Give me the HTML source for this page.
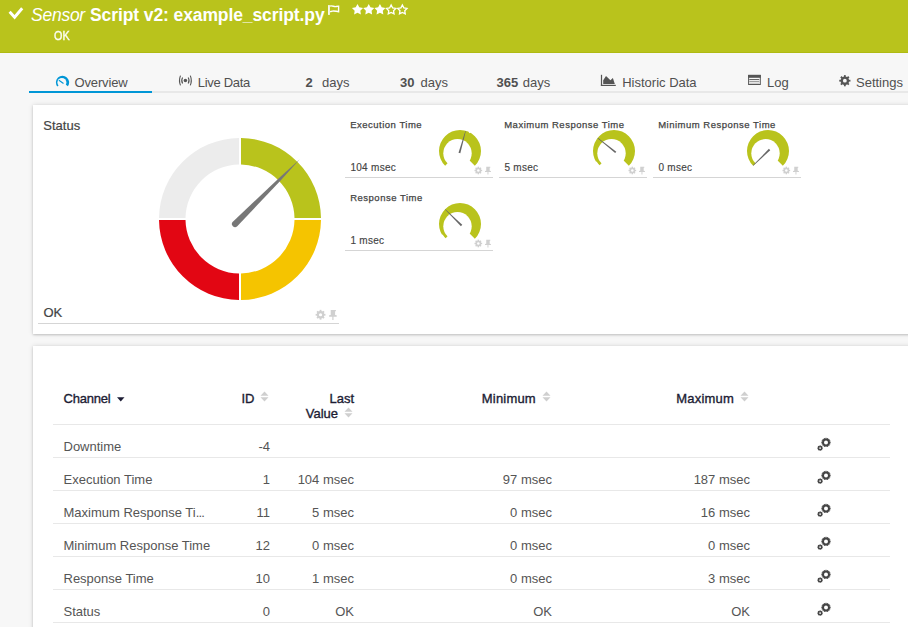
<!DOCTYPE html>
<html><head><meta charset="utf-8">
<style>
*{margin:0;padding:0;box-sizing:border-box}
html,body{width:908px;height:627px;overflow:hidden;background:#f7f7f7;font-family:"Liberation Sans",sans-serif;position:relative}
.a{position:absolute;white-space:nowrap}
#hdr{position:absolute;left:0;top:0;width:908px;height:53px;background:#b9c31c;border-bottom:1px solid #afba12}
.card{position:absolute;background:#fff;box-shadow:0 0 5px rgba(0,0,0,0.13),0 1px 2px rgba(0,0,0,0.16)}
.tab{font-size:13px;line-height:13px;color:#505050}
.tab b{font-weight:bold}
.glbl{font-size:9.5px;line-height:9.5px;color:#444;letter-spacing:0.5px;-webkit-text-stroke:0.25px #444}
.gval{font-size:10px;line-height:10px;color:#444;letter-spacing:0.3px;-webkit-text-stroke:0.15px #444}
.gline{position:absolute;height:1px;background:#d5d5d5}
.th{font-size:13px;line-height:13px;color:#1c1c34;-webkit-text-stroke:0.35px #1c1c34}
.td{font-size:13px;line-height:13px;color:#555}
.r{text-align:right}
.rl{position:absolute;left:53px;width:837px;height:1px;background:#e8e8e8}
</style></head><body>
<div id="hdr"></div>
<!-- check -->
<svg class="a" style="left:7px;top:5px" width="18" height="16" viewBox="0 0 18 16"><polyline points="2.6,6.8 7.6,12.2 15.2,3.2" fill="none" stroke="#fff" stroke-width="2.9"/></svg>
<div class="a" style="left:31px;top:6px;font-size:17.5px;line-height:18px;color:#fff;font-style:italic;letter-spacing:-0.25px">Sensor</div>
<div class="a" style="left:90px;top:6px;font-size:17.5px;line-height:18px;color:#fff;font-weight:bold;letter-spacing:-0.1px">Script v2: example_script.py</div>
<svg class="a" style="left:326px;top:3px" width="16" height="14" viewBox="0 0 16 14"><rect x="2.1" y="2.1" width="1.7" height="9.8" fill="#fff"/><path d="M4,3.1 C6.2,2.3 8.2,4.1 10.2,3.5 C11.4,3.2 12.4,3.1 12.6,3.1 V8.7 C10.4,8.6 8.4,7.5 6.4,8.1 C5.4,8.4 4.6,8.6 4,8.6" fill="none" stroke="#fff" stroke-width="1.4"/></svg>
<svg class="a" style="left:348px;top:0px" width="64" height="18" viewBox="0 0 64 18"><path d="M9.50,3.95 L11.26,7.32 L15.02,7.96 L12.35,10.68 L12.91,14.44 L9.50,12.75 L6.09,14.44 L6.65,10.68 L3.98,7.96 L7.74,7.32 Z" fill="#fff"/><path d="M20.72,3.95 L22.48,7.32 L26.24,7.96 L23.57,10.68 L24.13,14.44 L20.72,12.75 L17.31,14.44 L17.87,10.68 L15.20,7.96 L18.96,7.32 Z" fill="#fff"/><path d="M31.94,3.95 L33.70,7.32 L37.46,7.96 L34.79,10.68 L35.35,14.44 L31.94,12.75 L28.53,14.44 L29.09,10.68 L26.42,7.96 L30.18,7.32 Z" fill="#fff"/><path d="M43.16,5.00 L44.63,7.88 L47.82,8.39 L45.54,10.67 L46.04,13.86 L43.16,12.40 L40.28,13.86 L40.78,10.67 L38.50,8.39 L41.69,7.88 Z" fill="none" stroke="#fff" stroke-width="1.3" stroke-linejoin="miter"/><path d="M54.38,5.00 L55.85,7.88 L59.04,8.39 L56.76,10.67 L57.26,13.86 L54.38,12.40 L51.50,13.86 L52.00,10.67 L49.72,8.39 L52.91,7.88 Z" fill="none" stroke="#fff" stroke-width="1.3" stroke-linejoin="miter"/></svg>
<div class="a" style="left:54px;top:30px;font-size:12px;line-height:12px;color:#fbfdf0;-webkit-text-stroke:0.4px #fbfdf0;transform:scaleX(0.9);transform-origin:0 0">OK</div>

<!-- tabs -->
<div class="a" style="left:29px;top:91px;width:879px;height:2px;background:#e8e8e8"></div>
<div class="a" style="left:29px;top:91px;width:123px;height:2px;background:#0096d6"></div>
<svg class="a" style="left:52px;top:72px" width="20" height="18" viewBox="0 0 20 18"><defs><mask id="ovm"><rect width="20" height="18" fill="#fff"/><circle cx="9.9" cy="10.5" r="4.5" fill="#000"/></mask></defs><path d="M10.6,10.3 L5.3,14.4 A6.6,6.6 0 1 1 15.9,14.2 Z" fill="#0096d6" mask="url(#ovm)"/><path d="M6.9,8.3 L11.5,11.5" stroke="#0096d6" stroke-width="1.1"/></svg>
<div class="a tab" style="left:74.5px;top:76px;letter-spacing:-0.15px">Overview</div>
<svg class="a" style="left:177px;top:73px" width="17" height="15" viewBox="0 0 17 15"><circle cx="8.4" cy="7.5" r="1.75" fill="#555"/><path d="M3.5,2.6 Q1.5,7.5 3.5,12.4 M5.6,4.5 Q3.8,7.5 5.6,10.5 M11.2,4.5 Q13,7.5 11.2,10.5 M13.3,2.6 Q15.3,7.5 13.3,12.4" fill="none" stroke="#555" stroke-width="1.1"/></svg>
<div class="a tab" style="left:197.8px;top:76px;letter-spacing:-0.3px">Live Data</div>
<div class="a tab" style="left:305.6px;top:76px"><b>2</b></div>
<div class="a tab" style="left:322px;top:76px">days</div>
<div class="a tab" style="left:400px;top:76px"><b>30</b></div>
<div class="a tab" style="left:420.6px;top:76px">days</div>
<div class="a tab" style="left:496.6px;top:76px"><b>365</b></div>
<div class="a tab" style="left:522.7px;top:76px">days</div>
<svg class="a" style="left:596px;top:70px" width="22" height="18" viewBox="0 0 22 18"><rect x="4.9" y="4.8" width="1.2" height="11.2" fill="#555"/><rect x="4.9" y="14.8" width="14.9" height="1.2" fill="#555"/><path d="M7.2,14 V10.2 L10,6 L14.4,10.2 L16.9,8.1 L18.8,14 Z" fill="#555"/></svg>
<div class="a tab" style="left:622.2px;top:76px">Historic Data</div>
<svg class="a" style="left:742px;top:70px" width="22" height="18" viewBox="0 0 22 18"><rect x="6.6" y="5.4" width="11.7" height="9.1" fill="none" stroke="#555" stroke-width="1"/><rect x="6.1" y="4.9" width="12.7" height="2.9" fill="#555"/><rect x="7.3" y="9.1" width="9.9" height="0.9" fill="#555"/><rect x="7.3" y="10.9" width="9.9" height="0.9" fill="#888"/><rect x="7.3" y="12.7" width="9.9" height="1" fill="#bbb"/></svg>
<div class="a tab" style="left:767px;top:76px">Log</div>
<svg class="a" style="left:834px;top:70px" width="22" height="20" viewBox="0 0 22 20"><g fill="#555"><circle cx="10.85" cy="10.7" r="4.3"/><rect x="9.95" y="5.1" width="1.8" height="11.2" transform="rotate(0 10.85 10.7)"/><rect x="9.95" y="5.1" width="1.8" height="11.2" transform="rotate(45 10.85 10.7)"/><rect x="9.95" y="5.1" width="1.8" height="11.2" transform="rotate(90 10.85 10.7)"/><rect x="9.95" y="5.1" width="1.8" height="11.2" transform="rotate(135 10.85 10.7)"/></g><circle cx="10.85" cy="10.7" r="1.9" fill="#f7f7f7"/></svg>
<div class="a tab" style="left:856px;top:76px">Settings</div>

<!-- status card -->
<div class="card" style="left:33px;top:105px;width:900px;height:229px"></div>
<div class="a td" style="left:43.3px;top:119px;color:#444;-webkit-text-stroke:0.2px #444">Status</div>
<svg class="a" style="left:155px;top:134px" width="170" height="170" viewBox="0 0 170 170">
<g transform="translate(85,85)">
<path d="M-1,-81 A81,81 0 0 0 -81,-1 L-54.5,-1 A54.5,54.5 0 0 1 -1,-54.5 Z" fill="#ececec"/>
<path d="M1,-81 A81,81 0 0 1 81,-1 L54.5,-1 A54.5,54.5 0 0 0 1,-54.5 Z" fill="#b9c31c"/>
<path d="M81,1 A81,81 0 0 1 1,81 L1,54.5 A54.5,54.5 0 0 0 54.5,1 Z" fill="#f5c400"/>
<path d="M-1,81 A81,81 0 0 1 -81,1 L-54.5,1 A54.5,54.5 0 0 0 -1,54.5 Z" fill="#e20613"/>
<g transform="rotate(-45)"><path d="M-7,-3.1 L56,-1.45 L84.5,0 L56,1.45 L-7,3.1 A3.1,3.1 0 0 1 -7,-3.1 Z" fill="#777"/></g>
</g></svg>
<div class="a td" style="left:43.4px;top:306px;color:#444;-webkit-text-stroke:0.2px #444">OK</div>
<div class="gline" style="left:38px;top:323px;width:301px"></div>
<svg class="a" style="left:315px;top:309px" width="23.00" height="12.00" viewBox="0 0 23 12"><g fill="#d0d0d0"><circle cx="5.55" cy="5.75" r="3.7"/><rect x="4.65" y="0.85" width="1.8" height="9.8" transform="rotate(0 5.55 5.75)"/><rect x="4.65" y="0.85" width="1.8" height="9.8" transform="rotate(45 5.55 5.75)"/><rect x="4.65" y="0.85" width="1.8" height="9.8" transform="rotate(90 5.55 5.75)"/><rect x="4.65" y="0.85" width="1.8" height="9.8" transform="rotate(135 5.55 5.75)"/></g><circle cx="5.55" cy="5.75" r="1.6" fill="#fff"/><path d="M15.7,1 H20.9 V2.2 H20.1 V6.1 L21.7,6.3 V7.7 H14.1 V6.3 L15.7,6.1 V2.2 H15.7 Z M17.3,7.7 H18.5 V10.9 H17.3 Z" fill="#d0d0d0"/></svg>


<!-- GAUGES -->
<div class="a glbl" style="left:350.2px;top:120.0px;">Execution Time</div>
<div class="a gval" style="left:350.4px;top:163.2px;">104 msec</div>
<div class="gline" style="left:345px;top:177px;width:148px"></div>
<svg class="a" style="left:473.6px;top:166.1px" width="17.94" height="9.36" viewBox="0 0 23 12"><g fill="#d0d0d0"><circle cx="5.55" cy="5.75" r="3.7"/><rect x="4.65" y="0.85" width="1.8" height="9.8" transform="rotate(0 5.55 5.75)"/><rect x="4.65" y="0.85" width="1.8" height="9.8" transform="rotate(45 5.55 5.75)"/><rect x="4.65" y="0.85" width="1.8" height="9.8" transform="rotate(90 5.55 5.75)"/><rect x="4.65" y="0.85" width="1.8" height="9.8" transform="rotate(135 5.55 5.75)"/></g><circle cx="5.55" cy="5.75" r="1.6" fill="#fff"/><path d="M15.7,1 H20.9 V2.2 H20.1 V6.1 L21.7,6.3 V7.7 H14.1 V6.3 L15.7,6.1 V2.2 H15.7 Z M17.3,7.7 H18.5 V10.9 H17.3 Z" fill="#d0d0d0"/></svg>
<svg class="a" style="left:435px;top:126px" width="50" height="50" viewBox="0 0 50 50"><path d="M25,25 L10.15,39.85 A21,21 0 1 1 39.85,39.85 Z" fill="#b9c31c"/><circle cx="22.5" cy="27.3" r="14.2" fill="#fff"/><path d="M33.79,4.29 L33.99,7.36 L36.59,5.71 Z" fill="#fff"/><g transform="translate(25 25) rotate(-74.4)"><path d="M-2.2,-0.95 L20.8,-0.25 L20.8,0.25 L-2.2,0.95 Z" fill="#666"/></g></svg>
<div class="a glbl" style="left:504.2px;top:120.0px;">Maximum Response Time</div>
<div class="a gval" style="left:504.4px;top:163.2px;">5 msec</div>
<div class="gline" style="left:499px;top:177px;width:148px"></div>
<svg class="a" style="left:627.6px;top:166.1px" width="17.94" height="9.36" viewBox="0 0 23 12"><g fill="#d0d0d0"><circle cx="5.55" cy="5.75" r="3.7"/><rect x="4.65" y="0.85" width="1.8" height="9.8" transform="rotate(0 5.55 5.75)"/><rect x="4.65" y="0.85" width="1.8" height="9.8" transform="rotate(45 5.55 5.75)"/><rect x="4.65" y="0.85" width="1.8" height="9.8" transform="rotate(90 5.55 5.75)"/><rect x="4.65" y="0.85" width="1.8" height="9.8" transform="rotate(135 5.55 5.75)"/></g><circle cx="5.55" cy="5.75" r="1.6" fill="#fff"/><path d="M15.7,1 H20.9 V2.2 H20.1 V6.1 L21.7,6.3 V7.7 H14.1 V6.3 L15.7,6.1 V2.2 H15.7 Z M17.3,7.7 H18.5 V10.9 H17.3 Z" fill="#d0d0d0"/></svg>
<svg class="a" style="left:589px;top:126px" width="50" height="50" viewBox="0 0 50 50"><path d="M25,25 L10.15,39.85 A21,21 0 1 1 39.85,39.85 Z" fill="#b9c31c"/><circle cx="22.5" cy="27.3" r="14.2" fill="#fff"/><path d="M9.66,41.46 A22.5,22.5 0 0 1 5.71,36.59 L7.60,35.46 A20.3,20.3 0 0 0 11.16,39.85 Z" fill="#fff"/><g transform="translate(25 25) rotate(-141.5)"><path d="M-2.2,-0.95 L20.8,-0.25 L20.8,0.25 L-2.2,0.95 Z" fill="#666"/></g></svg>
<div class="a glbl" style="left:658.2px;top:120.0px;">Minimum Response Time</div>
<div class="a gval" style="left:658.4px;top:163.2px;">0 msec</div>
<div class="gline" style="left:653px;top:177px;width:148px"></div>
<svg class="a" style="left:781.6px;top:166.1px" width="17.94" height="9.36" viewBox="0 0 23 12"><g fill="#d0d0d0"><circle cx="5.55" cy="5.75" r="3.7"/><rect x="4.65" y="0.85" width="1.8" height="9.8" transform="rotate(0 5.55 5.75)"/><rect x="4.65" y="0.85" width="1.8" height="9.8" transform="rotate(45 5.55 5.75)"/><rect x="4.65" y="0.85" width="1.8" height="9.8" transform="rotate(90 5.55 5.75)"/><rect x="4.65" y="0.85" width="1.8" height="9.8" transform="rotate(135 5.55 5.75)"/></g><circle cx="5.55" cy="5.75" r="1.6" fill="#fff"/><path d="M15.7,1 H20.9 V2.2 H20.1 V6.1 L21.7,6.3 V7.7 H14.1 V6.3 L15.7,6.1 V2.2 H15.7 Z M17.3,7.7 H18.5 V10.9 H17.3 Z" fill="#d0d0d0"/></svg>
<svg class="a" style="left:743px;top:126px" width="50" height="50" viewBox="0 0 50 50"><path d="M25,25 L10.15,39.85 A21,21 0 1 1 39.85,39.85 Z" fill="#b9c31c"/><circle cx="22.5" cy="27.3" r="14.2" fill="#fff"/><g transform="translate(25 25) rotate(135.6)"><path d="M-2.2,-0.95 L20.8,-0.25 L20.8,0.25 L-2.2,0.95 Z" fill="#666"/></g></svg>
<div class="a glbl" style="left:350.2px;top:193.0px;">Response Time</div>
<div class="a gval" style="left:350.4px;top:236.2px;">1 msec</div>
<div class="gline" style="left:345px;top:250px;width:148px"></div>
<svg class="a" style="left:473.6px;top:239.1px" width="17.94" height="9.36" viewBox="0 0 23 12"><g fill="#d0d0d0"><circle cx="5.55" cy="5.75" r="3.7"/><rect x="4.65" y="0.85" width="1.8" height="9.8" transform="rotate(0 5.55 5.75)"/><rect x="4.65" y="0.85" width="1.8" height="9.8" transform="rotate(45 5.55 5.75)"/><rect x="4.65" y="0.85" width="1.8" height="9.8" transform="rotate(90 5.55 5.75)"/><rect x="4.65" y="0.85" width="1.8" height="9.8" transform="rotate(135 5.55 5.75)"/></g><circle cx="5.55" cy="5.75" r="1.6" fill="#fff"/><path d="M15.7,1 H20.9 V2.2 H20.1 V6.1 L21.7,6.3 V7.7 H14.1 V6.3 L15.7,6.1 V2.2 H15.7 Z M17.3,7.7 H18.5 V10.9 H17.3 Z" fill="#d0d0d0"/></svg>
<svg class="a" style="left:435px;top:199px" width="50" height="50" viewBox="0 0 50 50"><path d="M25,25 L10.15,39.85 A21,21 0 1 1 39.85,39.85 Z" fill="#b9c31c"/><circle cx="22.5" cy="27.3" r="14.2" fill="#fff"/><path d="M9.66,41.46 A22.5,22.5 0 0 1 5.71,36.59 L7.60,35.46 A20.3,20.3 0 0 0 11.16,39.85 Z" fill="#fff"/><g transform="translate(25 25) rotate(-135.5)"><path d="M-2.2,-0.95 L20.8,-0.25 L20.8,0.25 L-2.2,0.95 Z" fill="#666"/></g></svg>


<!-- table card -->
<div class="card" style="left:33px;top:346px;width:900px;height:300px"></div>
<div class="a th" style="left:63.5px;top:391.8px;letter-spacing:-0.2px">Channel</div>
<svg class="a" style="left:117px;top:397px" width="8" height="5" viewBox="0 0 8 5"><path d="M0,0.3 H7.5 L3.75,4.6 Z" fill="#1c1c34"/></svg>
<div class="a th r" style="left:-45.6px;width:300px;top:392.0px;">ID</div>
<svg class="a" style="left:260px;top:391px" width="9" height="11" viewBox="0 0 9 11"><path d="M4.5,0.5 L8.5,4.8 H0.5 Z M4.5,10.5 L8.5,6.2 H0.5 Z" fill="#cfcfcf"/></svg>
<div class="a th r" style="left:54.1px;width:300px;top:392.0px;">Last</div>
<div class="a th r" style="left:38.1px;width:300px;top:407.0px;">Value</div>
<svg class="a" style="left:344px;top:406.5px" width="9" height="11" viewBox="0 0 9 11"><path d="M4.5,0.5 L8.5,4.8 H0.5 Z M4.5,10.5 L8.5,6.2 H0.5 Z" fill="#cfcfcf"/></svg>
<div class="a th r" style="left:235.9px;width:300px;top:392.0px;letter-spacing:0.2px">Minimum</div>
<svg class="a" style="left:542px;top:391px" width="9" height="11" viewBox="0 0 9 11"><path d="M4.5,0.5 L8.5,4.8 H0.5 Z M4.5,10.5 L8.5,6.2 H0.5 Z" fill="#cfcfcf"/></svg>
<div class="a th r" style="left:434.0px;width:300px;top:392.0px;letter-spacing:0.2px">Maximum</div>
<svg class="a" style="left:740px;top:391px" width="9" height="11" viewBox="0 0 9 11"><path d="M4.5,0.5 L8.5,4.8 H0.5 Z M4.5,10.5 L8.5,6.2 H0.5 Z" fill="#cfcfcf"/></svg>
<div class="rl" style="top:424px"></div>
<div class="a td" style="left:63.5px;top:439.7px;">Downtime</div>
<div class="a td r" style="left:-30.0px;width:300px;top:439.7px;">-4</div>
<svg class="a" style="left:817px;top:437px" width="15" height="15" viewBox="0 0 15 15"><g fill="#444"><circle cx="9" cy="5.4" r="3.6"/><rect x="8.4" y="0.8" width="1.2" height="9.2" transform="rotate(0.0 9 5.4)"/><rect x="8.4" y="0.8" width="1.2" height="9.2" transform="rotate(22.5 9 5.4)"/><rect x="8.4" y="0.8" width="1.2" height="9.2" transform="rotate(45.0 9 5.4)"/><rect x="8.4" y="0.8" width="1.2" height="9.2" transform="rotate(67.5 9 5.4)"/><rect x="8.4" y="0.8" width="1.2" height="9.2" transform="rotate(90.0 9 5.4)"/><rect x="8.4" y="0.8" width="1.2" height="9.2" transform="rotate(112.5 9 5.4)"/><rect x="8.4" y="0.8" width="1.2" height="9.2" transform="rotate(135.0 9 5.4)"/><rect x="8.4" y="0.8" width="1.2" height="9.2" transform="rotate(157.5 9 5.4)"/><circle cx="3.1" cy="11.1" r="2.2"/><rect x="2.6" y="8.2" width="1" height="5.8" transform="rotate(0 3.1 11.1)"/><rect x="2.6" y="8.2" width="1" height="5.8" transform="rotate(45 3.1 11.1)"/><rect x="2.6" y="8.2" width="1" height="5.8" transform="rotate(90 3.1 11.1)"/><rect x="2.6" y="8.2" width="1" height="5.8" transform="rotate(135 3.1 11.1)"/></g><circle cx="9" cy="5.4" r="2" fill="#fff"/><circle cx="3.1" cy="11.1" r="0.9" fill="#fff"/></svg>
<div class="rl" style="top:457px"></div>
<div class="a td" style="left:63.5px;top:472.7px;">Execution Time</div>
<div class="a td r" style="left:-30.0px;width:300px;top:472.7px;">1</div>
<div class="a td r" style="left:54.0px;width:300px;top:472.7px;">104 msec</div>
<div class="a td r" style="left:252.0px;width:300px;top:472.7px;">97 msec</div>
<div class="a td r" style="left:450.0px;width:300px;top:472.7px;">187 msec</div>
<svg class="a" style="left:817px;top:470px" width="15" height="15" viewBox="0 0 15 15"><g fill="#444"><circle cx="9" cy="5.4" r="3.6"/><rect x="8.4" y="0.8" width="1.2" height="9.2" transform="rotate(0.0 9 5.4)"/><rect x="8.4" y="0.8" width="1.2" height="9.2" transform="rotate(22.5 9 5.4)"/><rect x="8.4" y="0.8" width="1.2" height="9.2" transform="rotate(45.0 9 5.4)"/><rect x="8.4" y="0.8" width="1.2" height="9.2" transform="rotate(67.5 9 5.4)"/><rect x="8.4" y="0.8" width="1.2" height="9.2" transform="rotate(90.0 9 5.4)"/><rect x="8.4" y="0.8" width="1.2" height="9.2" transform="rotate(112.5 9 5.4)"/><rect x="8.4" y="0.8" width="1.2" height="9.2" transform="rotate(135.0 9 5.4)"/><rect x="8.4" y="0.8" width="1.2" height="9.2" transform="rotate(157.5 9 5.4)"/><circle cx="3.1" cy="11.1" r="2.2"/><rect x="2.6" y="8.2" width="1" height="5.8" transform="rotate(0 3.1 11.1)"/><rect x="2.6" y="8.2" width="1" height="5.8" transform="rotate(45 3.1 11.1)"/><rect x="2.6" y="8.2" width="1" height="5.8" transform="rotate(90 3.1 11.1)"/><rect x="2.6" y="8.2" width="1" height="5.8" transform="rotate(135 3.1 11.1)"/></g><circle cx="9" cy="5.4" r="2" fill="#fff"/><circle cx="3.1" cy="11.1" r="0.9" fill="#fff"/></svg>
<div class="rl" style="top:490px"></div>
<div class="a td" style="left:63.5px;top:505.7px;">Maximum Response Ti<span style="letter-spacing:-0.8px">...</span></div>
<div class="a td r" style="left:-30.0px;width:300px;top:505.7px;">11</div>
<div class="a td r" style="left:54.0px;width:300px;top:505.7px;">5 msec</div>
<div class="a td r" style="left:252.0px;width:300px;top:505.7px;">0 msec</div>
<div class="a td r" style="left:450.0px;width:300px;top:505.7px;">16 msec</div>
<svg class="a" style="left:817px;top:503px" width="15" height="15" viewBox="0 0 15 15"><g fill="#444"><circle cx="9" cy="5.4" r="3.6"/><rect x="8.4" y="0.8" width="1.2" height="9.2" transform="rotate(0.0 9 5.4)"/><rect x="8.4" y="0.8" width="1.2" height="9.2" transform="rotate(22.5 9 5.4)"/><rect x="8.4" y="0.8" width="1.2" height="9.2" transform="rotate(45.0 9 5.4)"/><rect x="8.4" y="0.8" width="1.2" height="9.2" transform="rotate(67.5 9 5.4)"/><rect x="8.4" y="0.8" width="1.2" height="9.2" transform="rotate(90.0 9 5.4)"/><rect x="8.4" y="0.8" width="1.2" height="9.2" transform="rotate(112.5 9 5.4)"/><rect x="8.4" y="0.8" width="1.2" height="9.2" transform="rotate(135.0 9 5.4)"/><rect x="8.4" y="0.8" width="1.2" height="9.2" transform="rotate(157.5 9 5.4)"/><circle cx="3.1" cy="11.1" r="2.2"/><rect x="2.6" y="8.2" width="1" height="5.8" transform="rotate(0 3.1 11.1)"/><rect x="2.6" y="8.2" width="1" height="5.8" transform="rotate(45 3.1 11.1)"/><rect x="2.6" y="8.2" width="1" height="5.8" transform="rotate(90 3.1 11.1)"/><rect x="2.6" y="8.2" width="1" height="5.8" transform="rotate(135 3.1 11.1)"/></g><circle cx="9" cy="5.4" r="2" fill="#fff"/><circle cx="3.1" cy="11.1" r="0.9" fill="#fff"/></svg>
<div class="rl" style="top:523px"></div>
<div class="a td" style="left:63.5px;top:538.7px;">Minimum Response Time</div>
<div class="a td r" style="left:-30.0px;width:300px;top:538.7px;">12</div>
<div class="a td r" style="left:54.0px;width:300px;top:538.7px;">0 msec</div>
<div class="a td r" style="left:252.0px;width:300px;top:538.7px;">0 msec</div>
<div class="a td r" style="left:450.0px;width:300px;top:538.7px;">0 msec</div>
<svg class="a" style="left:817px;top:536px" width="15" height="15" viewBox="0 0 15 15"><g fill="#444"><circle cx="9" cy="5.4" r="3.6"/><rect x="8.4" y="0.8" width="1.2" height="9.2" transform="rotate(0.0 9 5.4)"/><rect x="8.4" y="0.8" width="1.2" height="9.2" transform="rotate(22.5 9 5.4)"/><rect x="8.4" y="0.8" width="1.2" height="9.2" transform="rotate(45.0 9 5.4)"/><rect x="8.4" y="0.8" width="1.2" height="9.2" transform="rotate(67.5 9 5.4)"/><rect x="8.4" y="0.8" width="1.2" height="9.2" transform="rotate(90.0 9 5.4)"/><rect x="8.4" y="0.8" width="1.2" height="9.2" transform="rotate(112.5 9 5.4)"/><rect x="8.4" y="0.8" width="1.2" height="9.2" transform="rotate(135.0 9 5.4)"/><rect x="8.4" y="0.8" width="1.2" height="9.2" transform="rotate(157.5 9 5.4)"/><circle cx="3.1" cy="11.1" r="2.2"/><rect x="2.6" y="8.2" width="1" height="5.8" transform="rotate(0 3.1 11.1)"/><rect x="2.6" y="8.2" width="1" height="5.8" transform="rotate(45 3.1 11.1)"/><rect x="2.6" y="8.2" width="1" height="5.8" transform="rotate(90 3.1 11.1)"/><rect x="2.6" y="8.2" width="1" height="5.8" transform="rotate(135 3.1 11.1)"/></g><circle cx="9" cy="5.4" r="2" fill="#fff"/><circle cx="3.1" cy="11.1" r="0.9" fill="#fff"/></svg>
<div class="rl" style="top:556px"></div>
<div class="a td" style="left:63.5px;top:571.7px;">Response Time</div>
<div class="a td r" style="left:-30.0px;width:300px;top:571.7px;">10</div>
<div class="a td r" style="left:54.0px;width:300px;top:571.7px;">1 msec</div>
<div class="a td r" style="left:252.0px;width:300px;top:571.7px;">0 msec</div>
<div class="a td r" style="left:450.0px;width:300px;top:571.7px;">3 msec</div>
<svg class="a" style="left:817px;top:569px" width="15" height="15" viewBox="0 0 15 15"><g fill="#444"><circle cx="9" cy="5.4" r="3.6"/><rect x="8.4" y="0.8" width="1.2" height="9.2" transform="rotate(0.0 9 5.4)"/><rect x="8.4" y="0.8" width="1.2" height="9.2" transform="rotate(22.5 9 5.4)"/><rect x="8.4" y="0.8" width="1.2" height="9.2" transform="rotate(45.0 9 5.4)"/><rect x="8.4" y="0.8" width="1.2" height="9.2" transform="rotate(67.5 9 5.4)"/><rect x="8.4" y="0.8" width="1.2" height="9.2" transform="rotate(90.0 9 5.4)"/><rect x="8.4" y="0.8" width="1.2" height="9.2" transform="rotate(112.5 9 5.4)"/><rect x="8.4" y="0.8" width="1.2" height="9.2" transform="rotate(135.0 9 5.4)"/><rect x="8.4" y="0.8" width="1.2" height="9.2" transform="rotate(157.5 9 5.4)"/><circle cx="3.1" cy="11.1" r="2.2"/><rect x="2.6" y="8.2" width="1" height="5.8" transform="rotate(0 3.1 11.1)"/><rect x="2.6" y="8.2" width="1" height="5.8" transform="rotate(45 3.1 11.1)"/><rect x="2.6" y="8.2" width="1" height="5.8" transform="rotate(90 3.1 11.1)"/><rect x="2.6" y="8.2" width="1" height="5.8" transform="rotate(135 3.1 11.1)"/></g><circle cx="9" cy="5.4" r="2" fill="#fff"/><circle cx="3.1" cy="11.1" r="0.9" fill="#fff"/></svg>
<div class="rl" style="top:589px"></div>
<div class="a td" style="left:63.5px;top:604.7px;">Status</div>
<div class="a td r" style="left:-30.0px;width:300px;top:604.7px;">0</div>
<div class="a td r" style="left:54.0px;width:300px;top:604.7px;">OK</div>
<div class="a td r" style="left:252.0px;width:300px;top:604.7px;">OK</div>
<div class="a td r" style="left:450.0px;width:300px;top:604.7px;">OK</div>
<svg class="a" style="left:817px;top:602px" width="15" height="15" viewBox="0 0 15 15"><g fill="#444"><circle cx="9" cy="5.4" r="3.6"/><rect x="8.4" y="0.8" width="1.2" height="9.2" transform="rotate(0.0 9 5.4)"/><rect x="8.4" y="0.8" width="1.2" height="9.2" transform="rotate(22.5 9 5.4)"/><rect x="8.4" y="0.8" width="1.2" height="9.2" transform="rotate(45.0 9 5.4)"/><rect x="8.4" y="0.8" width="1.2" height="9.2" transform="rotate(67.5 9 5.4)"/><rect x="8.4" y="0.8" width="1.2" height="9.2" transform="rotate(90.0 9 5.4)"/><rect x="8.4" y="0.8" width="1.2" height="9.2" transform="rotate(112.5 9 5.4)"/><rect x="8.4" y="0.8" width="1.2" height="9.2" transform="rotate(135.0 9 5.4)"/><rect x="8.4" y="0.8" width="1.2" height="9.2" transform="rotate(157.5 9 5.4)"/><circle cx="3.1" cy="11.1" r="2.2"/><rect x="2.6" y="8.2" width="1" height="5.8" transform="rotate(0 3.1 11.1)"/><rect x="2.6" y="8.2" width="1" height="5.8" transform="rotate(45 3.1 11.1)"/><rect x="2.6" y="8.2" width="1" height="5.8" transform="rotate(90 3.1 11.1)"/><rect x="2.6" y="8.2" width="1" height="5.8" transform="rotate(135 3.1 11.1)"/></g><circle cx="9" cy="5.4" r="2" fill="#fff"/><circle cx="3.1" cy="11.1" r="0.9" fill="#fff"/></svg>
<div class="rl" style="top:622px"></div>

</body></html>
